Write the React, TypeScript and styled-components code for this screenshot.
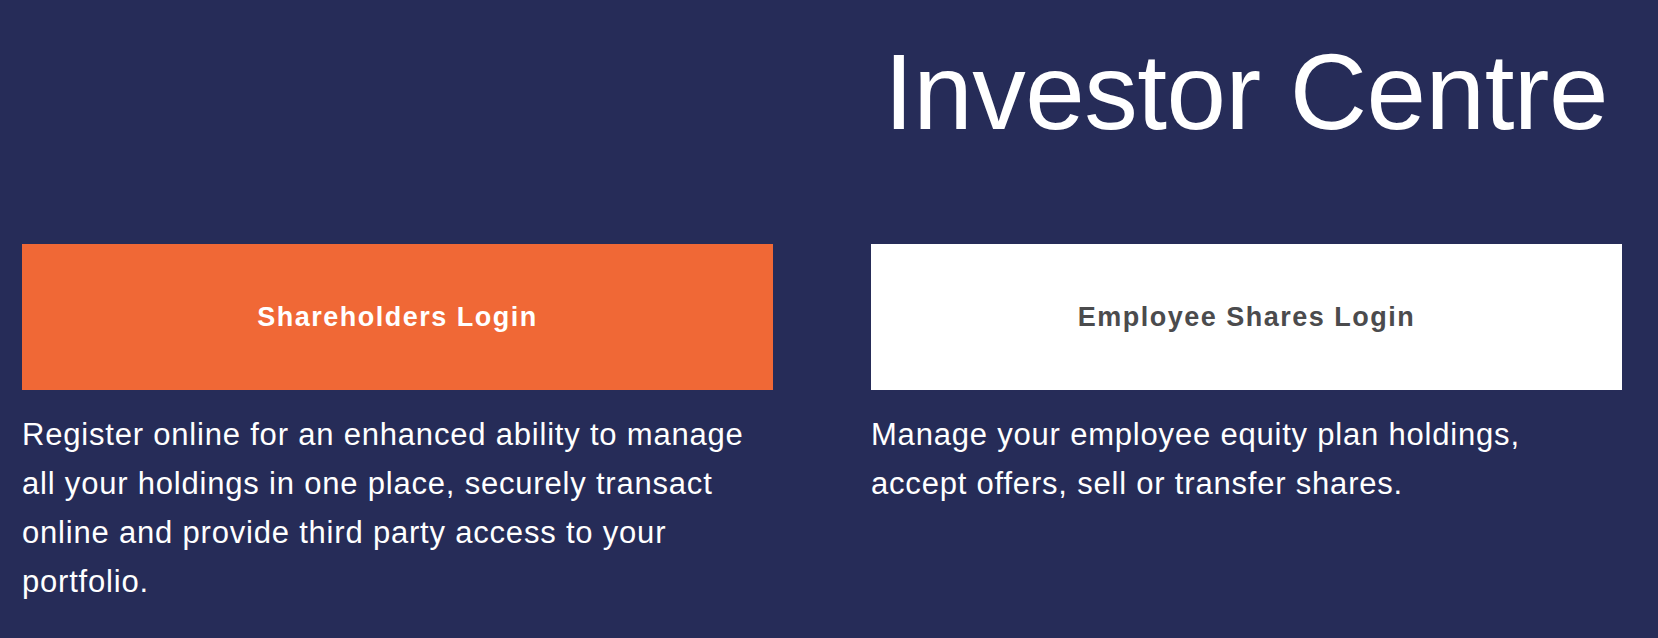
import styled, { createGlobalStyle } from "styled-components";

const GlobalStyle = createGlobalStyle`
  html, body {
    margin: 0;
    padding: 0;
    background: #262c58;
  }
  * {
    box-sizing: border-box;
  }
`;

const Page = styled.div`
  display: flex;
  flex-direction: column;
  min-height: 100vh;
  padding: 38px 36px 0 22px;
  background: #262c58;
  font-family: "Liberation Sans", Arial, Helvetica, sans-serif;
  color: #ffffff;
`;

const Header = styled.div`
  display: flex;
  flex-direction: row;
  justify-content: flex-end;
  padding-right: 14px;
`;

const Title = styled.h1`
  margin: 0;
  font-size: 107px;
  line-height: 108px;
  font-weight: 400;
  letter-spacing: -0.5px;
  color: #ffffff;
`;

const Columns = styled.div`
  display: grid;
  grid-template-columns: 1fr 1fr;
  column-gap: 98px;
  margin-top: 98px;
`;

const Column = styled.div`
  display: flex;
  flex-direction: column;
`;

const LoginButton = styled.a<{ $variant: "orange" | "white" }>`
  display: flex;
  justify-content: center;
  align-items: center;
  height: 146px;
  background: ${(p) => (p.$variant === "orange" ? "#f06836" : "#ffffff")};
  color: ${(p) => (p.$variant === "orange" ? "#ffffff" : "#4b4b4d")};
  font-size: 27px;
  font-weight: 700;
  letter-spacing: 1.5px;
  text-decoration: none;
  cursor: pointer;
`;

const Description = styled.p`
  margin: 20px 0 0 0;
  padding-right: 20px;
  font-size: 31px;
  line-height: 49px;
  letter-spacing: 0.8px;
  color: #ffffff;
`;

const logins = [
  {
    label: "Shareholders Login",
    variant: "orange" as const,
    text: "Register online for an enhanced ability to manage all your holdings in one place, securely transact online and provide third party access to your portfolio.",
  },
  {
    label: "Employee Shares Login",
    variant: "white" as const,
    text: "Manage your employee equity plan holdings, accept offers, sell or transfer shares.",
  },
];

export default function App() {
  return (
    <>
      <GlobalStyle />
      <Page>
        <Header>
          <Title>Investor Centre</Title>
        </Header>
        <Columns>
          {logins.map((item) => (
            <Column key={item.label}>
              <LoginButton $variant={item.variant}>{item.label}</LoginButton>
              <Description>{item.text}</Description>
            </Column>
          ))}
        </Columns>
      </Page>
    </>
  );
}
